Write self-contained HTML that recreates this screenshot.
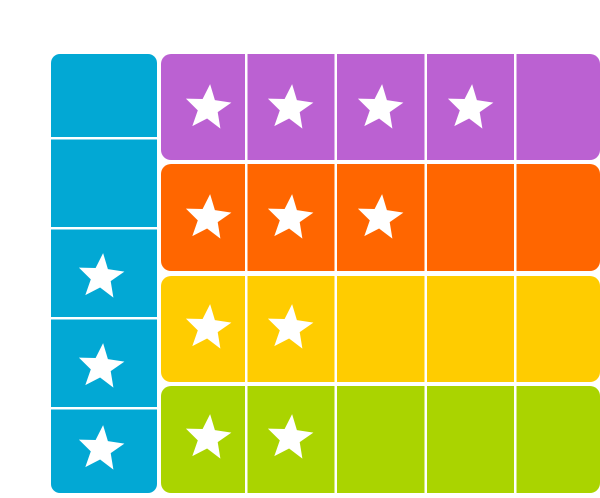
<!DOCTYPE html>
<html><head><style>
body{margin:0;width:600px;height:493px;background:#fff;overflow:hidden}
</style></head><body>
<svg width="600" height="493" viewBox="0 0 600 493" xmlns="http://www.w3.org/2000/svg">
<defs>
<polygon id="s" fill="#fff" points="2.1,-23.9 6.9,-7.9 23.4,-5.4 9.7,4.1 12.4,20.6 -0.9,10.5 -15.7,18.1 -10.2,2.4 -22.1,-9.4 -5.4,-9"/>
</defs>
<rect x="51" y="54" width="106" height="439" rx="9" fill="#02a8d4"/>
<rect x="51" y="137" width="106" height="2.5" fill="#fff"/>
<rect x="51" y="227" width="106" height="2.5" fill="#fff"/>
<rect x="51" y="317" width="106" height="2.5" fill="#fff"/>
<rect x="51" y="407" width="106" height="2.5" fill="#fff"/>
<rect x="161" y="54" width="439" height="106" rx="10" fill="#bb61d2"/>
<rect x="161" y="164" width="439" height="107" rx="10" fill="#ff6600"/>
<rect x="161" y="276" width="439" height="106" rx="10" fill="#ffcc00"/>
<rect x="161" y="386" width="439" height="107" rx="10" fill="#aad400"/>
<rect x="245" y="50" width="2.5" height="443" fill="#fff"/>
<rect x="334.5" y="50" width="2.5" height="443" fill="#fff"/>
<rect x="424.5" y="50" width="2.5" height="443" fill="#fff"/>
<rect x="514" y="50" width="2.5" height="443" fill="#fff"/>
<use href="#s" x="208" y="108"/><use href="#s" x="290" y="108"/><use href="#s" x="380" y="108"/><use href="#s" x="470" y="108"/>
<use href="#s" x="208" y="218"/><use href="#s" x="290" y="218"/><use href="#s" x="380" y="218"/>
<use href="#s" x="208" y="328"/><use href="#s" x="290" y="328"/>
<use href="#s" x="208" y="438"/><use href="#s" x="290" y="438"/>
<use href="#s" x="101" y="277"/><use href="#s" x="101" y="367"/><use href="#s" x="101" y="449"/>
</svg>
</body></html>
